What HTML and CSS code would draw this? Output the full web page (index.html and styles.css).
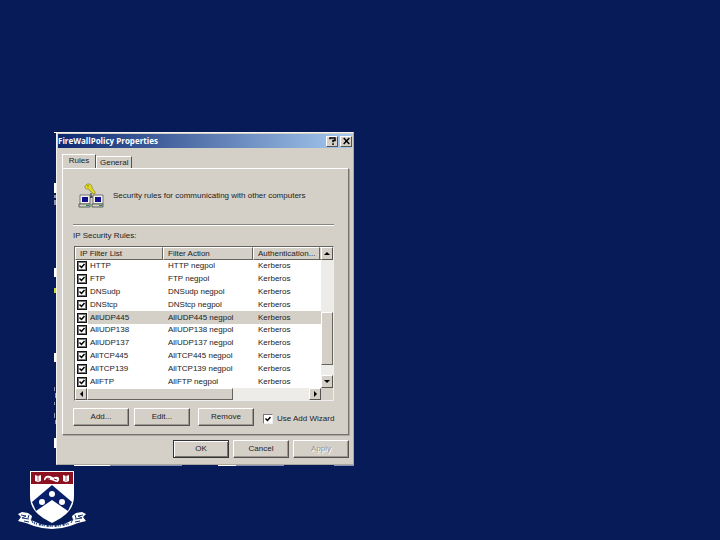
FILE: index.html
```
<!DOCTYPE html>
<html lang="en">
<head>
<meta charset="utf-8">
<title>FireWallPolicy Properties</title>
<link rel="stylesheet" href="styles.css">
</head>
<body>
<main class="stage">
<svg class="specks" width="300" height="336" viewBox="0 0 300 336" shape-rendering="crispEdges" aria-hidden="true">
<path fill="#fff" d="M0 0h3v1H0zM0 51h3v10H0zM0 136h3v9H0zM0 221h3v9H0zM0 306h3v10H0zM20 333h36v1H20zM164 333h18v1h-18z"/>
<path fill="#c8d832" d="M0 156h3v5H0z"/>
<path fill="#8792b4" d="M0 63h2v3H0zM0 68h2v5H0zM0 255h1v4H0zM1 261h1v5H1zM0 270h1v3H0zM0 281h1v5H0zM1 288h1v4H1zM56 333h72v1H56zM182 333h48v1h-48zM280 333h20v1h-20z"/>
</svg>
<form class="dialog">
<header class="titlebar">
<h1>FireWallPolicy Properties</h1>
<button type="button" class="cap" aria-label="Help"><svg width="7" height="8" viewBox="0 0 7 8"><path d="M1 2.200V1h5v2.500H4V5.300M4 6.200V8" fill="none" stroke="#000" stroke-width="1.500"/></svg></button>
<button type="button" class="cap" aria-label="Close"><svg width="7" height="8" viewBox="0 0 7 8"><path d="M.7 1l5.600 6M6.300 1L.7 7" fill="none" stroke="#000" stroke-width="1.500"/></svg></button>
</header>
<nav class="tabs"><button type="button" class="tab active">Rules</button><button type="button" class="tab">General</button></nav>
<section class="panel">
<div class="intro">
<svg width="24" height="24" viewBox="0 0 24 24" aria-hidden="true">
<path d="M12 9v5M6 15v-2h12v2" fill="none" stroke="#222" stroke-width="1"/>
<path d="M6 2l2-2h3l2 2v2l3 4v2h-2l-1-2-2-1-1-2H8L6 4z" fill="#e4dc20" stroke="#77751c" stroke-width=".6"/>
<path d="M8 2h2" stroke="#77751c"/>
<g id="pc"><path d="M1 11h10v9H1z" fill="#f4f1e8" stroke="#555c60" stroke-width=".8"/><path d="M3 13h6v5H3z" fill="#10108c"/><path d="M0 20h11v3H0z" fill="#d8d5c4" stroke="#34443f" stroke-width=".8"/><path d="M7 21.500h3" stroke="#2c8050"/></g>
<use href="#pc" x="13"/>
</svg>
<p>Security rules for communicating with other computers</p>
</div>
<h2>IP Security Rules:</h2>
<div class="list">
<table>
<colgroup><col class="c1"><col class="c2"><col class="c3"><col></colgroup>
<thead><tr><th>IP Filter List</th><th>Filter Action</th><th>Authentication...</th><th></th></tr></thead>
<tbody>
<tr><td><label><input type="checkbox" checked><span>HTTP</span></label></td><td>HTTP negpol</td><td>Kerberos</td><td></td></tr>
<tr><td><label><input type="checkbox" checked><span>FTP</span></label></td><td>FTP negpol</td><td>Kerberos</td><td></td></tr>
<tr><td><label><input type="checkbox" checked><span>DNSudp</span></label></td><td>DNSudp negpol</td><td>Kerberos</td><td></td></tr>
<tr><td><label><input type="checkbox" checked><span>DNStcp</span></label></td><td>DNStcp negpol</td><td>Kerberos</td><td></td></tr>
<tr class="selected"><td><label><input type="checkbox" checked><span>AllUDP445</span></label></td><td>AllUDP445 negpol</td><td>Kerberos</td><td></td></tr>
<tr><td><label><input type="checkbox" checked><span>AllUDP138</span></label></td><td>AllUDP138 negpol</td><td>Kerberos</td><td></td></tr>
<tr><td><label><input type="checkbox" checked><span>AllUDP137</span></label></td><td>AllUDP137 negpol</td><td>Kerberos</td><td></td></tr>
<tr><td><label><input type="checkbox" checked><span>AllTCP445</span></label></td><td>AllTCP445 negpol</td><td>Kerberos</td><td></td></tr>
<tr><td><label><input type="checkbox" checked><span>AllTCP139</span></label></td><td>AllTCP139 negpol</td><td>Kerberos</td><td></td></tr>
<tr><td><label><input type="checkbox" checked><span>AllFTP</span></label></td><td>AllFTP negpol</td><td>Kerberos</td><td></td></tr>
</tbody>
</table>
<div class="vbar"><button type="button" aria-label="Scroll up"><svg width="6" height="3" viewBox="0 0 6 3"><path d="M0 3l3-3 3 3z"/></svg></button><i class="track"></i><i class="thumb"></i><i class="gap"></i><button type="button" aria-label="Scroll down"><svg width="6" height="3" viewBox="0 0 6 3"><path d="M0 0l3 3 3-3z"/></svg></button></div>
<div class="hbar"><button type="button" aria-label="Scroll left"><svg width="3" height="6" viewBox="0 0 3 6"><path d="M3 0L0 3l3 3z"/></svg></button><i class="thumb"></i><i class="track"></i><button type="button" aria-label="Scroll right"><svg width="3" height="6" viewBox="0 0 3 6"><path d="M0 0l3 3-3 3z"/></svg></button></div>
</div>
<div class="actions">
<button type="button" class="btn">Add...</button>
<button type="button" class="btn">Edit...</button>
<button type="button" class="btn remove">Remove</button>
<label class="wizard"><input type="checkbox" checked><span>Use Add Wizard</span></label>
</div>
</section>
<footer class="confirm">
<button type="button" class="btn default">OK</button>
<button type="button" class="btn">Cancel</button>
<button type="button" class="btn" disabled>Apply</button>
</footer>
</form>
</main>
<svg class="crest" width="72" height="60" viewBox="0 0 72 60" role="img" aria-label="University crest">
<path d="M14 1h44v25c0 13-8 20-22 27C22 46 14 39 14 26z" fill="#fff"/>
<path d="M15 2h42v12H15z" fill="#8d1020"/>
<path d="M19 5l3 1 3-1v6l-3 1-3-1zM47 5l3 1 3-1v6l-3 1-3-1z" fill="#fff"/>
<path d="M22 6v5M50 6v5" stroke="#b4606c"/>
<path d="M28 10c0-4 3-5 6-4s3 2 5 1 5 0 4 3-3 2-5 1-4-1-6-2-3 2-4 1z" fill="#fff"/>
<path d="M30 9l2-1 2 1m4 0l3 1" stroke="#8d1020" fill="none"/>
<path d="M36 15l20 17-4 9-16-11-16 11-4-9z" fill="#081f6c"/>
<g fill="#fff"><circle cx="36" cy="24" r="3"/><circle cx="26" cy="32" r="3"/><circle cx="46" cy="32" r="3"/></g>
<path d="M2 44l4-2 6 1 4 3-1 4 9 4q12 3 24 0l9-4-1-4 4-3 6-1 4 2-3 3 3 4-8 2-8 3q-18 6-36 0l-8-3-8-2 3-4z" fill="#fff"/>
<path d="M5 45l5 1-4 2 7 1M67 45l-5 1 4 2-7 1M13 45l-1 3M59 45l1 3M15 49l2 4M57 49l-2 4M8 51l5 1M64 51l-5 1" fill="none" stroke="#173577"/>
<path d="M18 53q18 6 36 0" fill="none" stroke="#173577" stroke-width="2" stroke-dasharray="1 1 1 2 2 1"/>
</svg>
</body>
</html>
```
FILE: styles.css
```
* { box-sizing: border-box; }
body {
  margin: 0;
  padding: 132px 16px 0;
  min-height: 100vh;
  background: #061b57;
  color: #222;
  font: 8px/12px "Liberation Sans", Arial, sans-serif;
}
h1, h2, p { margin: 0; font-weight: 400; font-size: 8px; }
button { font: inherit; color: inherit; padding: 0; margin: 0; background: #d4d0c8; border: 1px solid; border-color: #fff #55534f #55534f #fff; display: flex; align-items: center; justify-content: center; }
.stage { position: relative; width: 300px; max-width: 100%; margin-left: 38px; }
.specks { position: absolute; left: 0; top: 0; }
.dialog { position: relative; margin-left: 2px; padding: 1px 2px 6px; background: #d4d0c8; border: 1px solid; border-color: #f4f2ee #aaa7a0 #aaa7a0 #f4f2ee; }
.titlebar { display: flex; align-items: center; gap: 2px; height: 14px; margin: 0 -1px; background: linear-gradient(90deg, #0c2770, #a6caf0); }
.titlebar h1 { flex: 1; color: #fff; font: 700 8px/14px "Open Sans", "DejaVu Sans", sans-serif; white-space: nowrap; }
.cap { width: 12px; height: 11px; }
.tabs { display: flex; align-items: flex-end; height: 20px; padding: 6px 3px 0; }
.tab { height: 12px; padding: 0 3px; border-bottom: 0; }
.tab.active { height: 14px; width: 34px; padding-bottom: 2px; }
.panel { margin: 0 2px 0 3px; padding: 14px 14px 8px 10px; border: 1px solid; border-color: #fff #77746e #77746e #fff; box-shadow: 1px 1px #aaa7a0; }
.intro { display: flex; align-items: center; gap: 10px; height: 42px; padding: 0 0 16px 6px; border-bottom: 1px solid #888580; box-shadow: 0 1px #fff; white-space: nowrap; }
.intro svg { flex: none; overflow: visible; }
.panel h2 { margin: 5px 0 4px; line-height: 12px; }
.list { display: grid; grid-template-columns: 1fr 12px; background: #fff; border: 1px solid; border-color: #66645f #eee #eee #66645f; margin-left: 1px; }
table { width: 100%; height: 141px; table-layout: fixed; border-collapse: separate; border-spacing: 0; }
.c1 { width: 88px; }
.c2 { width: 90px; }
.c3 { width: 67px; }
th { height: 13px; padding: 0 0 0 4px; font-weight: 400; text-align: left; line-height: 11px; background: #d4d0c8; border: 1px solid; border-color: #fff #66645f #66645f #fff; white-space: nowrap; }
th:last-child { padding: 0; border-width: 1px 0; }
td { padding: 0 0 0 5px; line-height: 12px; white-space: nowrap; }
td:first-child { padding-left: 2px; }
td label { display: flex; align-items: center; gap: 2px; }
td span { flex: 1; padding-left: 1px; }
.selected td { background: #d4d0c8; }
.selected td:first-child { background: linear-gradient(90deg, #fff 13px, #d4d0c8 13px); }
input { appearance: none; flex: none; width: 10px; height: 10px; margin: 0; background: #fff url("data:image/svg+xml,%3Csvg xmlns='http://www.w3.org/2000/svg' viewBox='0 0 8 8'%3E%3Cpath d='M1.500 3.500l2 2 3-3.500' fill='none' stroke='%23000' stroke-width='1.500'/%3E%3C/svg%3E") center / 8px 8px no-repeat; border: 1px solid #111; }
td input { box-shadow: inset 0 0 0 1px #777; }
.vbar { display: flex; flex-direction: column; }
.vbar button { height: 13px; }
.hbar button { width: 12px; }
.thumb { background: #d4d0c8; border: 1px solid; border-color: #fff #66645f #66645f #fff; }
.track, .gap { background: #eeece8; }
.vbar .track { flex: 53; }
.vbar .thumb { flex: 53; }
.vbar .gap { flex: 10; }
.hbar { display: flex; height: 12px; }
.hbar .thumb { flex: 146; }
.hbar .track { flex: 77; }
.list::after { content: ""; background: #d4d0c8; }
.actions { display: flex; align-items: center; gap: 5px; margin-top: 7px; margin-right: -2px; }
.btn { flex: none; width: 56px; height: 18px; box-shadow: inset -1px -1px #9b9892; }
.remove { margin-left: 3px; }
.wizard { display: flex; align-items: center; gap: 4px; margin-left: 4px; padding-top: 4px; white-space: nowrap; }
.wizard input { border-color: #777 #eee #eee #777; }
.confirm { display: flex; justify-content: flex-end; gap: 4px; margin-top: 5px; padding-right: 2px; }
.default { border-color: #333; box-shadow: inset 1px 1px #fff, inset -1px -1px #77746e; }
.btn:disabled { color: #99968f; text-shadow: 1px 1px #fff; }
.crest { display: block; margin-top: 5px; }
```
